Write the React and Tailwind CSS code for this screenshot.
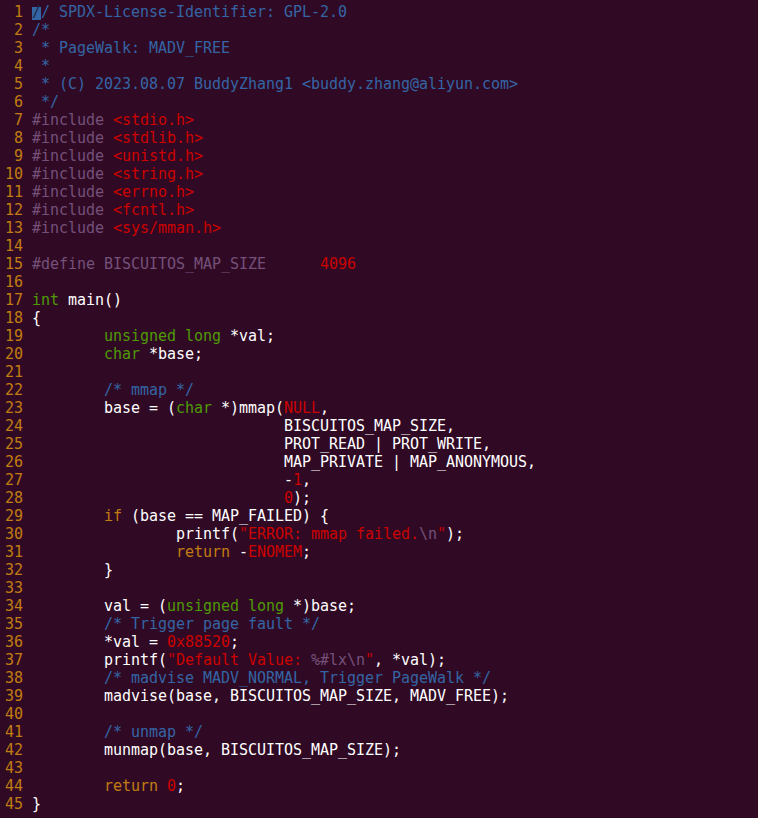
import React from "react";

const C = {
  c: "text-[#3465a4]",
  p: "text-[#75507b]",
  s: "text-[#cc0000]",
  n: "text-[#cc0000]",
  t: "text-[#4e9a06]",
  k: "text-[#c17d11]",
  e: "text-[#75507b]",
  w: "text-[#ffffff]",
};

const T8 = "        ";
const T16 = T8 + T8;
const T28 = T16 + T8 + "    ";

const lines = [
  [["cur", "/"], ["c", "/ SPDX-License-Identifier: GPL-2.0"]],
  [["c", "/*"]],
  [["c", " * PageWalk: MADV_FREE"]],
  [["c", " *"]],
  [["c", " * (C) 2023.08.07 BuddyZhang1 <buddy.zhang@aliyun.com>"]],
  [["c", " */"]],
  [["p", "#include "], ["s", "<stdio.h>"]],
  [["p", "#include "], ["s", "<stdlib.h>"]],
  [["p", "#include "], ["s", "<unistd.h>"]],
  [["p", "#include "], ["s", "<string.h>"]],
  [["p", "#include "], ["s", "<errno.h>"]],
  [["p", "#include "], ["s", "<fcntl.h>"]],
  [["p", "#include "], ["s", "<sys/mman.h>"]],
  [],
  [["p", "#define BISCUITOS_MAP_SIZE      "], ["n", "4096"]],
  [],
  [["t", "int"], ["w", " main()"]],
  [["w", "{"]],
  [["w", T8], ["t", "unsigned long"], ["w", " *val;"]],
  [["w", T8], ["t", "char"], ["w", " *base;"]],
  [],
  [["w", T8], ["c", "/* mmap */"]],
  [["w", T8 + "base = ("], ["t", "char"], ["w", " *)mmap("], ["n", "NULL"], ["w", ","]],
  [["w", T28 + "BISCUITOS_MAP_SIZE,"]],
  [["w", T28 + "PROT_READ | PROT_WRITE,"]],
  [["w", T28 + "MAP_PRIVATE | MAP_ANONYMOUS,"]],
  [["w", T28 + "-"], ["n", "1"], ["w", ","]],
  [["w", T28], ["n", "0"], ["w", ");"]],
  [["w", T8], ["k", "if"], ["w", " (base == MAP_FAILED) {"]],
  [["w", T16 + "printf("], ["s", "\"ERROR: mmap failed."], ["e", "\\n"], ["s", "\""], ["w", ");"]],
  [["w", T16], ["k", "return"], ["w", " -"], ["n", "ENOMEM"], ["w", ";"]],
  [["w", T8 + "}"]],
  [],
  [["w", T8 + "val = ("], ["t", "unsigned long"], ["w", " *)base;"]],
  [["w", T8], ["c", "/* Trigger page fault */"]],
  [["w", T8 + "*val = "], ["n", "0x88520"], ["w", ";"]],
  [["w", T8 + "printf("], ["s", "\"Default Value: "], ["e", "%#lx\\n"], ["s", "\""], ["w", ", *val);"]],
  [["w", T8], ["c", "/* madvise MADV_NORMAL, Trigger PageWalk */"]],
  [["w", T8 + "madvise(base, BISCUITOS_MAP_SIZE, MADV_FREE);"]],
  [],
  [["w", T8], ["c", "/* unmap */"]],
  [["w", T8 + "munmap(base, BISCUITOS_MAP_SIZE);"]],
  [],
  [["w", T8], ["k", "return"], ["w", " "], ["n", "0"], ["w", ";"]],
  [["w", "}"]],
];

export default function App() {
  return (
    <div
      className="w-[758px] h-[818px] overflow-hidden bg-[#300a24] pt-[3px] text-[15px] leading-[18px] tracking-[-0.03px] text-white"
      style={{ fontFamily: '"DejaVu Sans Mono", "Liberation Mono", monospace' }}
    >
      {lines.map((toks, i) => (
        <div key={i} className="flex h-[18px] whitespace-pre">
          <span className="w-[23px] shrink-0 text-right text-[#c17d11]">{i + 1}</span>
          <span className="pl-[9px]">
            {toks.map(([k, t], j) =>
              k === "cur" ? (
                <span
                  key={j}
                  className="inline-block h-[18px] align-top bg-[linear-gradient(to_bottom,transparent_4px,#3465a4_4px,#3465a4_17px,transparent_17px)] text-[#1c2a4a]"
                >
                  {t}
                </span>
              ) : (
                <span key={j} className={C[k]}>{t}</span>
              )
            )}
          </span>
        </div>
      ))}
    </div>
  );
}
